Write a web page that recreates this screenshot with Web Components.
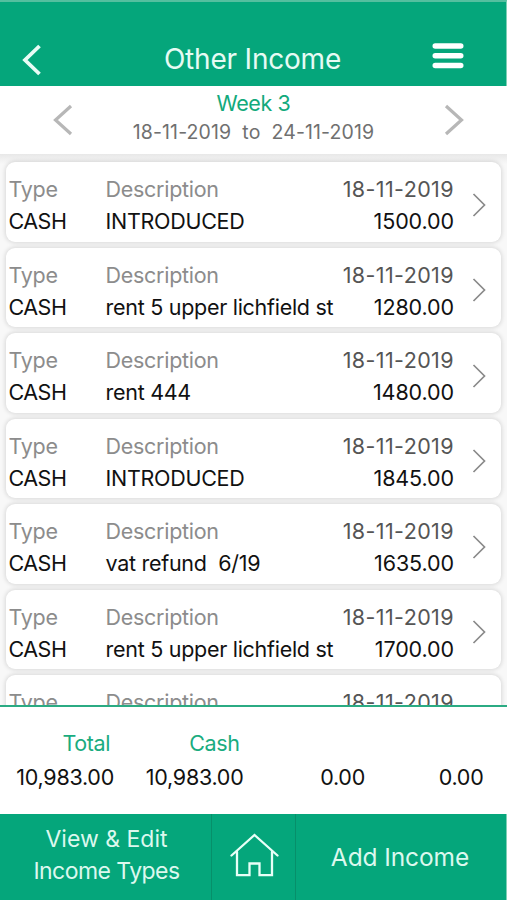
<!DOCTYPE html>
<html lang="en">
<head>
<meta charset="utf-8">
<title>Other Income</title>
<style>
    html, body {
        margin: 0;
        height: 100%;
        overflow: hidden;
        background: #fff;
        font-family: Inter, "Liberation Sans", sans-serif;
    }
</style>
</head>
<body>
<income-app></income-app>

<script>
/**
 * Green title bar with back arrow and menu button
 */
class AppHeader extends HTMLElement {
    constructor() {
        super();
        this.attachShadow({ mode: 'open' });
    }

    connectedCallback() {
        this.shadowRoot.innerHTML = `
            <style>
                :host {
                    display: grid;
                    grid-template-columns: 72px 1fr 72px;
                    align-items: center;
                    height: 86px;
                    padding-top: 30px;
                    box-sizing: border-box;
                    background: var(--green);
                    border-top: 2px solid #55bf9f;
                    border-right: 1px solid #7fcfb6;
                    color: #e6fbf4;
                }
                h1 {
                    margin: 0 1px 0 0;
                    font-size: 28px;
                    font-weight: 400;
                    line-height: 52px;
                    letter-spacing: -.2px;
                    text-align: center;
                    white-space: nowrap;
                }
                svg { display: block; fill: none; stroke: #fff; }
                .back { margin-left: 19px; margin-top: 1px; stroke: #eafcf6; }
                .menu { margin-left: -3px; margin-top: -7px; }
            </style>
            <svg class="back" width="24" height="34" viewBox="0 0 24 34" stroke-width="3.8">
                <path d="M20.5 3 6 17 20.5 31"/>
            </svg>
            <h1><slot></slot></h1>
            <svg class="menu" width="34" height="28" viewBox="0 0 34 28" stroke-width="5.4" stroke-linecap="round">
                <path d="M4.2 4h25.6M4.2 13.8h25.6M4.2 23.5h25.6"/>
            </svg>
        `;
    }
}
customElements.define('app-header', AppHeader);

/**
 * Week name and date range between two arrows
 */
class WeekPicker extends HTMLElement {
    constructor() {
        super();
        this.attachShadow({ mode: 'open' });
    }

    connectedCallback() {
        this.shadowRoot.innerHTML = `
            <style>
                :host {
                    display: grid;
                    grid-template-columns: 22px 1fr 22px;
                    align-items: center;
                    height: 68px;
                    padding: 0 42px 0 52px;
                    box-sizing: border-box;
                    background: #fff;
                }
                svg { display: block; fill: none; stroke: #b7b7b7; stroke-width: 3.2; }
                .text { text-align: center; white-space: pre; margin: 0 10px 4px 0; }
                .week {
                    font-size: 21.5px;
                    line-height: 29px;
                    letter-spacing: -.4px;
                    color: #12aa7c;
                }
                .range {
                    font-size: 19.5px;
                    line-height: 29px;
                    letter-spacing: .1px;
                    color: #707070;
                }
            </style>
            <svg width="22" height="34" viewBox="0 0 22 34"><path d="M19 3 3.5 17 19 31"/></svg>
            <div class="text"><div class="week"></div><div class="range"></div></div>
            <svg width="22" height="34" viewBox="0 0 22 34"><path d="M3 3 18.5 17 3 31"/></svg>
        `;
        this.shadowRoot.querySelector('.week').textContent = this.getAttribute('week');
        this.shadowRoot.querySelector('.range').textContent = this.getAttribute('range');
    }
}
customElements.define('week-picker', WeekPicker);

/**
 * One income entry
 */
class IncomeCard extends HTMLElement {
    constructor() {
        super();
        this.attachShadow({ mode: 'open' });
    }

    connectedCallback() {
        this.shadowRoot.innerHTML = `
            <style>
                :host {
                    display: grid;
                    grid-template-columns: 97px 1fr auto 47px;
                    grid-template-rows: 32px 31.5px;
                    align-content: start;
                    height: 79.5px;
                    padding: 12.2px 0 0 3px;
                    box-sizing: border-box;
                    background: #fff;
                    border-radius: 9px;
                    box-shadow: 0 0 4px 1px rgba(0, 0, 0, .13);
                    font-size: 21.5px;
                    line-height: 31.5px;
                    letter-spacing: -.28px;
                    white-space: pre;
                    color: #111;
                    flex: none;
                }
                .label { color: #8c8c8c; }
                .date, .amount { text-align: right; }
                .date { color: #555; letter-spacing: .4px; }
                .amount { letter-spacing: -.1px; }
                .type { letter-spacing: -.5px; }
                .desc { width: 0; }
                svg {
                    grid-area: 1 / 4 / 3 / 5;
                    align-self: center;
                    margin: -2px 0 0 17px;
                    fill: none;
                    stroke: #8a8a8a;
                    stroke-width: 1.7;
                }
            </style>
            <span class="label">Type</span>
            <span class="label">Description</span>
            <span class="date"></span>
            <svg width="16" height="26" viewBox="0 0 16 26"><path d="M2.5 2 13.5 13 2.5 24"/></svg>
            <span class="type"></span>
            <span class="desc"></span>
            <span class="amount"></span>
        `;
        ['date', 'type', 'desc', 'amount'].forEach(name => {
            this.shadowRoot.querySelector('.' + name).textContent = this.getAttribute(name);
        });
    }
}
customElements.define('income-card', IncomeCard);

/**
 * Totals strip under the list
 */
class TotalsBar extends HTMLElement {
    constructor() {
        super();
        this.attachShadow({ mode: 'open' });
    }

    connectedCallback() {
        this.shadowRoot.innerHTML = `
            <style>
                :host {
                    display: grid;
                    grid-template-columns: 114px 129.5px 121.5px 118.5px;
                    grid-template-rows: 34px 34px;
                    height: 109.5px;
                    padding-top: 19px;
                    box-sizing: border-box;
                    background: #fff;
                    border-top: 2.5px solid #2bab83;
                    font-size: 21.5px;
                    line-height: 34px;
                    letter-spacing: -.25px;
                    text-align: right;
                    color: #111;
                }
                .name { color: #1aac80; padding-right: 4px; letter-spacing: -.4px; }
            </style>
            <span class="name">Total</span>
            <span class="name">Cash</span>
            <span></span>
            <span></span>
            <span>10,983.00</span>
            <span>10,983.00</span>
            <span>0.00</span>
            <span>0.00</span>
        `;
    }
}
customElements.define('totals-bar', TotalsBar);

/**
 * Bottom navigation
 */
class BottomBar extends HTMLElement {
    constructor() {
        super();
        this.attachShadow({ mode: 'open' });
    }

    connectedCallback() {
        this.shadowRoot.innerHTML = `
            <style>
                :host {
                    display: grid;
                    grid-template-columns: 212px 84px 1fr;
                    height: 86px;
                    box-sizing: border-box;
                    background: var(--green);
                    border-right: 1px solid #7fcfb6;
                    color: #dcf8ee;
                    font-size: 23px;
                    line-height: 32px;
                    text-align: center;
                    white-space: nowrap;
                }
                div {
                    display: flex;
                    justify-content: center;
                    align-items: center;
                    box-sizing: border-box;
                }
                .types {
                    flex-direction: column;
                    padding: 0 0 4px 2px;
                    border-right: 1px solid #078f6a;
                }
                .types span + span { letter-spacing: -.55px; }
                .home { padding-bottom: 5px; border-right: 1px solid #078f6a; }
                .add { padding: 0 2px 1px 0; font-size: 24.5px; letter-spacing: -.1px; }
                svg { fill: none; stroke: #e8fff7; stroke-width: 2.3; stroke-linecap: round; }
            </style>
            <div class="types"><span>View &amp; Edit</span><span>Income Types</span></div>
            <div class="home">
                <svg width="50" height="46" viewBox="0 0 50 46">
                    <path d="M2.5 23.5 25.5 3 48.5 23.5M8 20V43.2H20.5V31.5H30.5V43.2H43V20"/>
                </svg>
            </div>
            <div class="add"><span>Add Income</span></div>
        `;
    }
}
customElements.define('bottom-bar', BottomBar);

class IncomeApp extends HTMLElement {
    constructor() {
        super();
        this.attachShadow({ mode: 'open' });
    }

    connectedCallback() {
        const date = '18-11-2019';
        const entries = [
            { desc: 'INTRODUCED', amount: '1500.00' },
            { desc: 'rent 5 upper lichfield st', amount: '1280.00' },
            { desc: 'rent 444', amount: '1480.00' },
            { desc: 'INTRODUCED', amount: '1845.00' },
            { desc: 'vat refund  6/19', amount: '1635.00' },
            { desc: 'rent 5 upper lichfield st', amount: '1700.00' },
            { desc: '', amount: '' }
        ];

        this.shadowRoot.innerHTML = `
            <style>
                :host {
                    --green: #05a67b;
                    display: flex;
                    flex-direction: column;
                    height: 900px;
                    width: 507px;
                }
                app-header, week-picker, totals-bar, bottom-bar { flex: none; }
                .list {
                    flex: 1;
                    min-height: 0;
                    overflow: hidden;
                    display: flex;
                    flex-direction: column;
                    gap: 6px;
                    padding: 8px 6px 0 5.5px;
                    background: linear-gradient(#e8e8e8, #f8f8f8 10px);
                }
            </style>
            <app-header>Other Income</app-header>
            <week-picker week="Week 3" range="18-11-2019  to  24-11-2019"></week-picker>
            <div class="list">
                ${entries.map(e => `<income-card type="${e.amount ? 'CASH' : ''}" date="${date}" desc="${e.desc}" amount="${e.amount}"></income-card>`).join('')}
            </div>
            <totals-bar></totals-bar>
            <bottom-bar></bottom-bar>
        `;
    }
}
customElements.define('income-app', IncomeApp);
</script>
</body>
</html>
